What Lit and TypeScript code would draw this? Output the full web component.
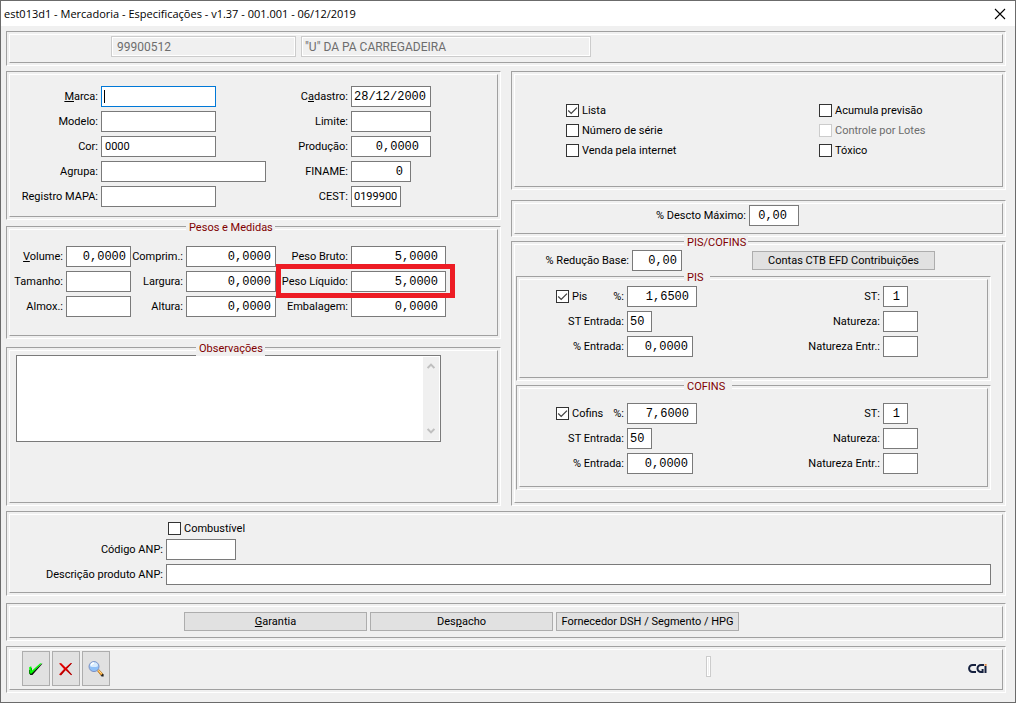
import { LitElement, html, css, nothing, TemplateResult } from "lit";
import { customElement } from "lit/decorators.js";

type Text = string | TemplateResult;

interface Field {
  id: string;
  label: Text;
  value?: string;
  cls: string;
}

const pane = (cls: string, body: TemplateResult, title?: string) => html`
  <section class="panel ${cls}">
    ${title ? html`<h2 class="title">${title}</h2>` : nothing}
    <div class="body">${body}</div>
  </section>
`;

const field = (f: Field) => html`
  <label for=${f.id}>${f.label}</label>
  <input id=${f.id} class="box ${f.cls}" type="text" .value=${f.value ?? ""} />
`;

const check = (id: string, label: string, checked = false, disabled = false) => html`
  <span class="check">
    <input id=${id} type="checkbox" .checked=${checked} ?disabled=${disabled} />
    <label for=${id}>${label}</label>
  </span>
`;

@customElement("app-root")
export class AppRoot extends LitElement {
  static styles = css`
    :host {
      display: block;
      font: 11px/15px Roboto, "Liberation Sans", sans-serif;
      color: #000;
    }
    * {
      box-sizing: border-box;
    }
    .window {
      display: flex;
      flex-direction: column;
      min-height: 100vh;
      border: 1px solid #6b6b6b;
      background: #f0f0f0;
    }
    .titlebar {
      display: flex;
      align-items: center;
      justify-content: space-between;
      height: 25px;
      padding: 0 9px 0 3px;
      background: #fff;
    }
    .titlebar h1 {
      margin: 0;
      font: 11px/16px "Open Sans", "Noto Sans", sans-serif;
    }
    .close {
      display: flex;
      padding: 0;
      border: 0;
      background: none;
    }
    main {
      display: flex;
      flex-direction: column;
      flex: 1;
      gap: 5px;
      padding: 5px 9px 9px 5px;
    }
    .columns {
      display: grid;
      grid-template-columns: 1fr 1fr;
      gap: 10px;
    }
    .column {
      display: flex;
      flex-direction: column;
    }

    /* Etched double frame */
    .panel {
      position: relative;
      display: flex;
      flex-direction: column;
      padding: 2px;
      border: 1px solid;
      border-color: #a0a0a0 #fff #fff #a0a0a0;
    }
    .body {
      flex: 1;
      border: 1px solid;
      border-color: #fff #a0a0a0 #a0a0a0 #fff;
    }
    .title {
      position: absolute;
      top: -7px;
      left: 179px;
      margin: 0;
      padding: 0 2px 0 3px;
      font: inherit;
      color: #800000;
      background: #f0f0f0;
    }

    .box {
      width: 100%;
      height: 21px;
      padding: 0 3px;
      border: 1px solid #7a7a7a;
      border-radius: 0;
      outline: 0;
      font: inherit;
      color: #000;
      background: #fff;
    }
    .box:disabled {
      border-color: #ccc;
      color: #6d6d6d;
      background: #f0f0f0;
      box-shadow: inset 0 0 0 1px #fff;
    }
    .mono {
      padding: 0 2px;
      font: 12px/15px "Liberation Mono", monospace;
    }
    .end-s,
    .end-m,
    .end-l {
      text-align: right;
    }
    .end-s {
      padding-right: 4px;
    }
    .end-m {
      padding-right: 7px;
    }
    .end-l {
      padding-right: 11px;
    }
    .w25 {
      width: 25px;
    }
    .w50 {
      width: 50px;
    }
    .w60 {
      width: 60px;
    }
    .w66 {
      width: 66px;
    }
    .w70 {
      width: 70px;
    }
    .w80 {
      width: 80px;
    }
    .w115 {
      width: 115px;
    }
    .snug {
      padding: 0 2px;
    }

    .fields {
      display: grid;
      row-gap: 4px;
      align-items: center;
    }
    .fields label {
      padding-right: 3px;
      text-align: right;
      white-space: nowrap;
    }
    .pair {
      display: grid;
      grid-template-columns: subgrid;
      grid-column: span 2;
      position: relative;
      align-items: center;
    }
    .focused .box {
      border-color: #0078d7;
    }
    .focused::after {
      content: "";
      position: absolute;
      top: 4px;
      left: 94px;
      width: 1px;
      height: 13px;
      background: #000;
    }
    .marked::after {
      content: "";
      position: absolute;
      inset: -7px -9px -6px 0;
      z-index: 1;
      border: 5px solid #ed1c24;
      pointer-events: none;
    }

    .check {
      display: flex;
      align-items: center;
      gap: 3px;
      height: 15px;
    }
    .check label {
      padding: 0;
      white-space: nowrap;
    }
    .check input {
      appearance: none;
      flex: none;
      width: 13px;
      height: 13px;
      margin: 0;
      border: 1px solid #333;
      background: #fff;
    }
    .check input:checked {
      background: #fff
        url("data:image/svg+xml,%3Csvg xmlns='http://www.w3.org/2000/svg' width='11' height='11'%3E%3Cpath d='M1.2 5.6 4.2 8.4 10 2.6' fill='none' stroke='%23444' stroke-width='1.3'/%3E%3C/svg%3E");
    }
    .check input:disabled {
      border-color: #ccc;
    }
    .check input:disabled + label {
      color: #6d6d6d;
    }

    .push {
      height: 19px;
      padding: 0 3px;
      border: 1px solid #adadad;
      font: inherit;
      color: #000;
      background: #e1e1e1;
      white-space: nowrap;
    }

    .item .body {
      display: flex;
      gap: 5px;
      padding: 1px 5px 5px 101px;
    }
    .item .box {
      font-size: 12px;
    }
    .item .code {
      width: 185px;
      padding-left: 5px;
    }
    .item .name {
      width: 290px;
    }

    .general {
      margin-bottom: 6px;
    }
    .general .body {
      display: flex;
      padding: 11px 5px 9px 0;
    }
    .general .first {
      grid-template-columns: 91px 165px;
    }
    .general .second {
      grid-template-columns: 85px 80px;
    }

    .measures {
      margin-bottom: 8px;
    }
    .measures .fields {
      grid-template-columns: 56px 65px 55px 90px 75px 95px;
      padding: 16px 0 18px;
    }

    .notes {
      flex: 1;
    }
    .notes .title {
      left: 189px;
    }
    .notes .body {
      padding: 4px 56px 60px 6px;
    }
    .memo {
      display: flex;
      height: 87px;
      padding-right: 1px;
      border: 1px solid #7a7a7a;
      background: #fff;
    }
    .memo textarea {
      flex: 1;
      padding: 2px 3px;
      border: 0;
      outline: 0;
      resize: none;
      font: inherit;
      background: #fff;
      overflow: hidden;
    }
    .scroll {
      display: flex;
      flex-direction: column;
      justify-content: space-between;
      align-items: center;
      width: 16px;
      margin: 1px 0;
      padding: 5px 0;
      background: #f0f0f0;
    }
    .scroll svg {
      display: block;
    }

    .flags {
      margin-bottom: 10px;
    }
    .flags .body {
      display: grid;
      grid-template-columns: 253px 1fr;
      align-content: start;
      row-gap: 5px;
      padding: 28px 0 28px 51px;
    }
    .discount {
      margin-bottom: 4px;
    }
    .discount .fields {
      grid-template-columns: 234px 1fr;
      padding: 1px 0 7px;
    }

    .taxes {
      flex: 1;
    }
    .taxes > .title {
      left: 172px;
    }
    .base {
      display: flex;
      align-items: center;
      padding: 5px 0;
    }
    .base .fields {
      grid-template-columns: 117px 50px;
      margin-right: 70px;
    }
    .base .push {
      width: 183px;
    }
    .tax {
      margin: 0 11px 4px 1px;
    }
    .tax .title {
      left: 167px;
      padding-right: 7px;
    }
    .tax .body {
      display: flex;
    }
    .pis .body {
      padding: 6px 0 20px;
    }
    .cofins .body {
      padding: 14px 0 12px;
    }
    .tax .rates {
      grid-template-columns: 107px 70px;
    }
    .tax .codes {
      grid-template-columns: 186px 35px;
    }
    .lead {
      display: flex;
      justify-content: space-between;
      padding-left: 36px;
    }

    .fuel .fields {
      grid-template-columns: 156px 1fr;
      padding: 6px 11px 7px 0;
    }
    .fuel .check {
      grid-column: 2;
      padding-left: 2px;
      margin-bottom: -1px;
    }
    .links {
      margin-top: 2px;
    }
    .links .body {
      display: flex;
      gap: 3px;
      padding: 5px 0 6px 174px;
    }
    .links .push {
      width: 183px;
    }

    .tools .body {
      display: flex;
      align-items: center;
      gap: 2px;
      padding: 1px 15px 3px 12px;
    }
    .tool {
      display: flex;
      align-items: center;
      justify-content: center;
      width: 28px;
      height: 35px;
      padding: 0;
      border: 1px solid #adadad;
      background: #e1e1e1;
    }
    .tools .status {
      width: 5px;
      margin: 0 auto 5px 594px;
      padding: 0;
    }
  `;

  render() {
    return html`
      <div class="window">
        <header class="titlebar">
          <h1>est013d1 - Mercadoria - Especificações - v1.37 - 001.001 - 06/12/2019</h1>
          <button class="close" aria-label="Fechar">
            <svg width="12" height="12" viewBox="0 0 12 12">
              <path d="M1 1 11 11M11 1 1 11" fill="none" stroke="#000" stroke-width="1.1" />
            </svg>
          </button>
        </header>
        <main>
          ${pane("item", html`
            <input class="box code" aria-label="Código" .value=${"99900512"} disabled />
            <input class="box name" aria-label="Mercadoria" .value=${'"U" DA PA CARREGADEIRA'} disabled />
          `)}
          <div class="columns">
            <div class="column">${this.general()} ${this.measures()} ${this.notes()}</div>
            <div class="column">${this.flags()} ${this.discount()} ${this.taxes()}</div>
          </div>
          ${this.fuel()} ${this.links()} ${this.tools()}
        </main>
      </div>
    `;
  }

  private general() {
    return pane("general", html`
      <div class="fields first">
        <div class="pair focused">${field({ id: "marca", label: html`<u>M</u>arca:`, cls: "w115" })}</div>
        ${field({ id: "modelo", label: "Modelo:", cls: "w115" })}
        ${field({ id: "cor", label: "Cor:", value: "0000", cls: "w115" })}
        ${field({ id: "agrupa", label: "Agrupa:", cls: "" })}
        ${field({ id: "mapa", label: "Registro MAPA:", cls: "w115" })}
      </div>
      <div class="fields second">
        ${field({ id: "cadastro", label: html`C<u>a</u>dastro:`, value: "28/12/2000", cls: "mono w80" })}
        ${field({ id: "limite", label: "Limite:", cls: "mono w80" })}
        ${field({ id: "producao", label: "Produção:", value: "0,0000", cls: "mono end-l w80" })}
        ${field({ id: "finame", label: "FINAME:", value: "0", cls: "mono end-m w60" })}
        ${field({ id: "cest", label: "CEST:", value: "0199900", cls: "snug w50" })}
      </div>
    `);
  }

  private measures() {
    const n = "mono end-s";
    return pane("measures", html`
      <div class="fields">
        ${field({ id: "volume", label: html`<u>V</u>olume:`, value: "0,0000", cls: n })}
        ${field({ id: "comprim", label: "Comprim.:", value: "0,0000", cls: n })}
        ${field({ id: "bruto", label: "Peso Bruto:", value: "5,0000", cls: "mono end-m" })}
        ${field({ id: "tamanho", label: "Tamanho:", cls: "" })}
        ${field({ id: "largura", label: "Largura:", value: "0,0000", cls: n })}
        <div class="pair marked">
          ${field({ id: "liquido", label: "Peso Líquido:", value: "5,0000", cls: "mono end-m" })}
        </div>
        ${field({ id: "almox", label: "Almox.:", cls: "" })}
        ${field({ id: "altura", label: "Altura:", value: "0,0000", cls: n })}
        ${field({ id: "embalagem", label: "Embalagem:", value: "0,0000", cls: "mono end-m" })}
      </div>
    `, "Pesos e Medidas");
  }

  private notes() {
    return pane("notes", html`
      <div class="memo">
        <textarea aria-label="Observações"></textarea>
        <div class="scroll" aria-hidden="true">
          <svg width="8" height="8" viewBox="0 0 8 8">
            <path d="M.6 6 4 2.6 7.4 6" fill="none" stroke="#bfbfbf" stroke-width="2" />
          </svg>
          <svg width="8" height="8" viewBox="0 0 8 8">
            <path d="M.6 2 4 5.4 7.4 2" fill="none" stroke="#bfbfbf" stroke-width="2" />
          </svg>
        </div>
      </div>
    `, "Observações");
  }

  private flags() {
    return pane("flags", html`
      ${check("lista", "Lista", true)} ${check("acumula", "Acumula previsão")}
      ${check("serie", "Número de série")} ${check("lotes", "Controle por Lotes", false, true)}
      ${check("internet", "Venda pela internet")} ${check("toxico", "Tóxico")}
    `);
  }

  private discount() {
    return pane("discount", html`
      <div class="fields">
        ${field({ id: "descto", label: "% Descto Máximo:", value: "0,00", cls: "mono end-l w50" })}
      </div>
    `);
  }

  private tax(key: string, name: string, title: string, rate: string) {
    return pane(`tax ${key}`, html`
      <div class="fields rates">
        <div class="lead">
          ${check(`${key}-on`, name, true)}
          <label for="${key}-rate">%:</label>
        </div>
        <input id="${key}-rate" class="box mono end-m" type="text" .value=${rate} />
        ${field({ id: `${key}-ste`, label: "ST Entrada:", value: "50", cls: "mono w25" })}
        ${field({ id: `${key}-ent`, label: "% Entrada:", value: "0,0000", cls: "mono end-s w66" })}
      </div>
      <div class="fields codes">
        ${field({ id: `${key}-st`, label: "ST:", value: "1", cls: "mono end-m w25" })}
        ${field({ id: `${key}-nat`, label: "Natureza:", cls: "" })}
        ${field({ id: `${key}-nate`, label: "Natureza Entr.:", cls: "" })}
      </div>
    `, title);
  }

  private taxes() {
    return pane("taxes", html`
      <div class="base">
        <div class="fields">
          ${field({ id: "reducao", label: "% Redução Base:", value: "0,00", cls: "mono end-s" })}
        </div>
        <button class="push">Contas CTB EFD Contribuições</button>
      </div>
      ${this.tax("pis", "Pis", "PIS", "1,6500")}
      ${this.tax("cofins", "Cofins", "COFINS", "7,6000")}
    `, "PIS/COFINS");
  }

  private fuel() {
    return pane("fuel", html`
      <div class="fields">
        ${check("combustivel", "Combustível")}
        ${field({ id: "anp", label: "Código ANP:", cls: "w70" })}
        ${field({ id: "anp-desc", label: "Descrição produto ANP:", cls: "" })}
      </div>
    `);
  }

  private links() {
    return pane("links", html`
      <button class="push"><u>G</u>arantia</button>
      <button class="push">Des<u>p</u>acho</button>
      <button class="push">Fornecedor DSH / Segmento / HPG</button>
    `);
  }

  private tools() {
    return pane("tools", html`
      <button class="tool" aria-label="Confirmar">
        <svg width="16" height="16" viewBox="0 0 16 16">
          <path d="M2.4 8 3.6 6.6 4.4 11 13 3.2 14.6 2.6 4.4 14H2Z" fill="#111" />
          <path d="M1.2 6.2 3.2 5.2 3.8 9.8 12 2.4 14 2 3.4 12.8H1.4Z" fill="#0f0" />
          <path d="M1.6 9V12.8H3.4" fill="none" stroke="#008000" />
        </svg>
      </button>
      <button class="tool" aria-label="Cancelar">
        <svg width="16" height="16" viewBox="0 0 16 16">
          <path d="M1 2.6 3 2 7.6 6.6 12.6 2 14 2.2 9 7.8 14 13.6 13.2 14.2 7.6 9.2 3 14.4 1 13.6 6 8Z" fill="#e00000" />
          <path d="M2.6 14 6.8 9.2M9 7.2 13.6 2.4M9.6 9.4 13.6 14" fill="none" stroke="#800000" stroke-width=".7" />
        </svg>
      </button>
      <button class="tool" aria-label="Pesquisar">
        <svg width="16" height="16" viewBox="0 0 16 16">
          <path d="M9.4 10 11 8.6 15.6 13.4V15.6H13.6Z" fill="#222" />
          <path d="M9 9.6 10.6 8.2 14.8 12.4 13 14.4Z" fill="#f0a030" />
          <path d="M10.6 9.4 13.6 12.6" fill="none" stroke="#ffe0a0" />
          <circle cx="6" cy="5.6" r="5" fill="#8fc0f8" stroke="#7f93c4" />
          <path d="M2 5.2A4 4 0 0 1 10 5.2Q6 7 2 5.2Z" fill="#d8ecff" />
          <path d="M3.2 4.4A3 3 0 0 1 6 2" fill="none" stroke="#fff" stroke-width="1.4" />
        </svg>
      </button>
      <input class="box status" aria-label="Situação" disabled />
      <svg width="19" height="12" viewBox="0 0 19 12" role="img" aria-label="CGI">
        <path d="M8 2H4.6A3.5 3.5 0 0 0 4.6 9H8" fill="none" stroke="#16213f" stroke-width="2" />
        <path d="M16 2H13A3.5 3.5 0 0 0 13 9H14.6V6" fill="none" stroke="#16213f" stroke-width="2" />
        <path d="M17.5 3V10" fill="none" stroke="#16213f" stroke-width="2" />
        <path d="M16.6 1H18.6V2.8H16.6Z" fill="#e0853a" />
      </svg>
    `);
  }
}
